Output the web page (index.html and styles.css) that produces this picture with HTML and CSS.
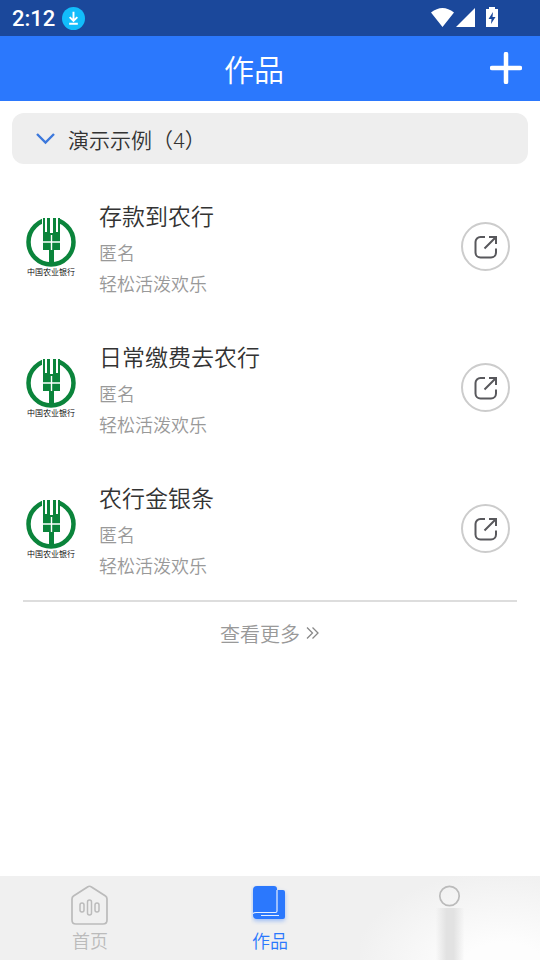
FILE: index.html
```html
<!DOCTYPE html>
<html lang="zh-CN">
<head>
  <meta charset="UTF-8">
  <meta name="viewport" content="width=device-width, initial-scale=1.0">
  <title>作品</title>
  <link rel="stylesheet" href="styles.css">
</head>
<body>
  <!-- shared icons -->
  <svg class="sprite" aria-hidden="true">
    <symbol id="bank" viewBox="0 0 50 50">
      <circle cx="25" cy="25" r="22.500" fill="none" stroke="#0b843b" stroke-width="4.500"/>
      <path d="M16 0h18v20H16z" fill="#fff"/>
      <path d="M17 1h2v14h2V1h3v15h3V1h3v14h2V1h2v32H17zM23 33h5v15h-5z" fill="#0b843b"/>
      <path d="M16 25h19M25.500 18v15" stroke="#fff" stroke-width="1.400"/>
    </symbol>
    <symbol id="share" viewBox="0 0 24 24">
      <path d="M11 2H6.500a5 5 0 0 0-5 5v10.500a5 5 0 0 0 5 5h10.500a5 5 0 0 0 5-5V13.500M10.500 13.500 21 3M15 2h7v7" fill="none" stroke="#58585c" stroke-width="2"/>
    </symbol>
  </svg>

  <div class="app">
    <div class="status-bar">
      <span class="time">2:12</span>
      <svg class="download" viewBox="0 0 24 24">
        <circle cx="12" cy="12" r="12" fill="#12bdfb"/>
        <path d="M12 5v9M8 10.500l4 4 4-4M7.500 17.500h9" fill="none" stroke="#fff" stroke-width="2"/>
      </svg>
      <svg class="signals" viewBox="0 0 68 22">
        <path d="M0 5.500Q11.500-3.500 23 5.500L11.500 20zM25 20 44 1v19z" fill="#fff"/>
        <path d="M55 2h3V0h6v2h3v18H55z" fill="#fff"/>
        <path d="M62 5l-4.500 7h3l-.5 5 4.500-7h-3z" fill="#1b489b"/>
      </svg>
    </div>

    <header class="header">
      <h1>作品</h1>
      <button class="add" type="button" aria-label="新建">
        <svg viewBox="0 0 32 32"><path d="M16 2v28M2 16h28" stroke="#fff" stroke-width="4.500" stroke-linecap="round"/></svg>
      </button>
    </header>

    <main class="content">
      <button class="group" type="button">
        <svg class="chevron" viewBox="0 0 20 12"><path d="M1 1l8.500 8.500L18 1" fill="none" stroke="#3c78dc" stroke-width="2.400"/></svg>
        演示示例（4）
      </button>

      <ul class="works">
        <li class="work">
          <div class="logo"><svg><use href="#bank"/></svg><span>中国农业银行</span></div>
          <div class="info">
            <h2>存款到农行</h2>
            <p>匿名</p>
            <p>轻松活泼欢乐</p>
          </div>
          <button class="share" type="button" aria-label="分享"><svg><use href="#share"/></svg></button>
        </li>
        <li class="work">
          <div class="logo"><svg><use href="#bank"/></svg><span>中国农业银行</span></div>
          <div class="info">
            <h2>日常缴费去农行</h2>
            <p>匿名</p>
            <p>轻松活泼欢乐</p>
          </div>
          <button class="share" type="button" aria-label="分享"><svg><use href="#share"/></svg></button>
        </li>
        <li class="work">
          <div class="logo"><svg><use href="#bank"/></svg><span>中国农业银行</span></div>
          <div class="info">
            <h2>农行金银条</h2>
            <p>匿名</p>
            <p>轻松活泼欢乐</p>
          </div>
          <button class="share" type="button" aria-label="分享"><svg><use href="#share"/></svg></button>
        </li>
      </ul>

      <a class="more" href="#">
        查看更多
        <svg viewBox="0 0 14 14"><path d="M1 1.500l5.500 5.500L1 12.500M6.500 1.500L12 7l-5.500 5.500" fill="none" stroke="#888" stroke-width="1.300"/></svg>
      </a>
    </main>

    <nav class="tabs">
      <a class="tab" href="#">
        <svg viewBox="0 0 38 40">
          <path d="M16.500 2q2-1.500 4 0L34.500 11q1.500 1 1.500 3v21q0 4-4 4H5q-4 0-4-4V14q0-2 1.500-3z" fill="none" stroke="#bbb" stroke-width="1.700"/>
          <g fill="none" stroke="#bbb" stroke-width="1.500">
            <rect x="9" y="18" width="4" height="9" rx="2"/>
            <rect x="16.500" y="15" width="4" height="15" rx="2"/>
            <rect x="24" y="18" width="4" height="9" rx="2"/>
          </g>
        </svg>
        <span>首页</span>
      </a>
      <a class="tab active" href="#">
        <svg viewBox="0 0 38 40">
          <path class="book" d="M6 1h17q3 0 3 3v1h6q2 0 2 2v25q0 2-2 2H6q-4 0-4-4V5q0-4 4-4z" fill="#2b78fd"/>
          <path d="M2 28.500q1-1 3-1H24.500q1.500 0 1.500-1.500V5M10 30.500h18" fill="none" stroke="#e6efff" stroke-width="1.200"/>
        </svg>
        <span>作品</span>
      </a>
      <a class="tab profile" href="#" aria-label="我的">
        <svg viewBox="0 0 38 40">
          <circle cx="18.500" cy="11" r="9.700" fill="none" stroke="#bbb" stroke-width="1.700"/>
        </svg>
      </a>
    </nav>
  </div>
</body>
</html>
```
FILE: styles.css
```css
* {
  box-sizing: border-box;
  margin: 0;
  padding: 0;
}

body {
  font-family: Roboto, "Noto Sans CJK SC", sans-serif;
  font-weight: 350;
  color: #333;
  background: #fff;
}

button {
  font: inherit;
  color: inherit;
  border: none;
  background: none;
  cursor: pointer;
}

a {
  text-decoration: none;
}

svg {
  display: block;
  flex-shrink: 0;
}

.sprite {
  position: absolute;
  width: 0;
  height: 0;
}

.app {
  display: flex;
  flex-direction: column;
  min-height: 100vh;
}

/* top */
.status-bar {
  display: flex;
  align-items: center;
  gap: 7px;
  height: 36px;
  padding: 0 41px 0 12px;
  background: #1b489b;
  color: #fff;
}

.time {
  font-size: 22px;
  font-weight: 500;
}

.download {
  width: 23px;
  height: 23px;
}

.signals {
  width: 68px;
  height: 22px;
  margin-left: auto;
}

.header {
  display: flex;
  align-items: center;
  height: 65px;
  padding: 0 18px 2px;
  background: #2b78fd;
  color: #fff;
}

.header h1 {
  flex: 1;
  text-align: center;
  font-size: 30px;
  font-weight: 350;
}

.add svg {
  width: 32px;
  height: 32px;
}

/* list */
.content {
  flex: 1;
  padding: 12px;
}

.group {
  display: flex;
  align-items: center;
  gap: 12px;
  width: 100%;
  height: 51px;
  padding: 0 24px;
  border-radius: 12px;
  background: #eee;
  font-size: 21px;
}

.chevron {
  width: 20px;
  height: 12px;
}

.works {
  display: flex;
  flex-direction: column;
  gap: 34px;
  margin: 0 11px;
  padding: 29px 7px 18px 3px;
  border-bottom: 2px solid #ddd;
  list-style: none;
}

.work {
  display: flex;
  align-items: center;
}

.logo {
  width: 50px;
  margin-right: 23px;
}

.logo svg {
  width: 50px;
  height: 50px;
}

.logo span {
  display: block;
  font-family: "Noto Sans CJK SC", sans-serif;
  font-size: 8px;
  line-height: 10px;
  color: #000;
  text-align: center;
  white-space: nowrap;
}

.info {
  flex: 1;
  padding-top: 5px;
}

.info h2 {
  font-size: 23px;
  font-weight: 350;
  line-height: 40px;
}

.info p {
  font-size: 18px;
  line-height: 31px;
  color: #999;
}

.share {
  display: flex;
  align-items: center;
  justify-content: center;
  width: 49px;
  height: 49px;
  border: 2px solid #ccc;
  border-radius: 50%;
}

.share svg {
  width: 24px;
  height: 24px;
}

.more {
  display: flex;
  align-items: center;
  justify-content: center;
  gap: 6px;
  height: 62px;
  font-size: 20px;
  color: #999;
}

.more svg {
  width: 14px;
  height: 14px;
}

/* bottom */
.tabs {
  display: flex;
  height: 84px;
  background: #f0f0f0;
}

.tab {
  display: flex;
  flex: 1;
  flex-direction: column;
  align-items: center;
  gap: 3px;
  padding-top: 9px;
  font-size: 18px;
  line-height: 28px;
  color: #bbb;
}

.tab svg {
  width: 38px;
  height: 40px;
}

.active {
  color: #2b78fd;
}

.book {
  filter: drop-shadow(0 2px 2px #9dbdf5);
}

.profile {
  background:
    linear-gradient(90deg, transparent 42%, #e2e2e2 48%, #e2e2e2 52%, transparent 58%) 0 32px / 100% 52px no-repeat,
    radial-gradient(ellipse at 80% 110%, #fdfdfd 20%, #f0f0f0 75%);
}
```
